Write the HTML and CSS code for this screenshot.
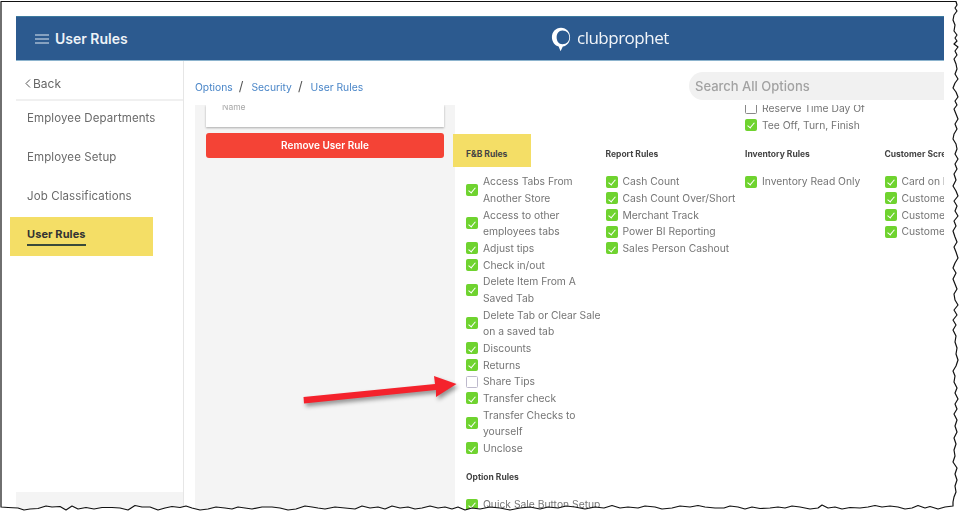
FILE: index.html
```html
<!DOCTYPE html>
<html lang="en">
<head>
<meta charset="utf-8">
<title>User Rules</title>
<link rel="stylesheet" href="styles.css">
</head>
<body>
<div class="page">
  <div class="app">
    <header class="topbar">
      <svg class="menu-icon" width="14" height="10" viewBox="0 0 14 10"><path d="M0 1H14M0 5H14M0 9H14" stroke="#dfe8f1" stroke-width="1"/></svg>
      <h1 class="title">User Rules</h1>
      <div class="logo">
        <svg class="logo-mark" width="20" height="27" viewBox="0 0 22 28"><path fill="#fff" fill-rule="evenodd" d="M11 1C5 1 1 5.800 1 11.500 1 16.800 4.600 20.800 8.400 21.700L10.500 27 13 21.800C17.800 21 21 16.800 21 11.500 21 5.800 17 1 11 1ZM12.500 4C8.500 4 6.200 7.300 6.200 11.500 6.200 15.700 8.500 19.200 12.500 19.200 17.500 19.200 20.100 15.700 20.100 11.500 20.100 7.300 17.500 4 12.500 4Z"/></svg>
        <span class="logo-text">clubprophet</span>
      </div>
    </header>
    <div class="workspace">
      <aside class="sidebar">
        <a class="back"><svg width="6" height="9" viewBox="0 0 6 9"><path d="M5 .5 1 4.500 5 8.500" fill="none" stroke="#555" stroke-width="1"/></svg>Back</a>
        <nav class="nav">
          <a class="nav-item">Employee Departments</a>
          <a class="nav-item">Employee Setup</a>
          <a class="nav-item">Job Classifications</a>
          <a class="nav-item nav-item-active"><span class="nav-label">User Rules</span></a>
        </nav>
        <div class="sidebar-foot"></div>
      </aside>
      <main class="main">
        <div class="toolbar">
          <ol class="crumbs">
            <li class="crumb">Options</li>
            <li class="sep">/</li>
            <li class="crumb">Security</li>
            <li class="sep">/</li>
            <li class="crumb">User Rules</li>
          </ol>
          <div class="search">Search All Options</div>
        </div>
        <div class="content">
          <section class="rule-list">
            <div class="card"><span class="card-label">Name</span></div>
            <button class="remove">Remove User Rule</button>
          </section>
          <section class="rules">
            <div class="grid">
              <div class="group group-top">
                <div class="rule"><i class="box box-dark"></i><span>Reserve Time Day Of</span></div>
                <div class="rule"><i class="box on"></i><span>Tee Off, Turn, Finish</span></div>
              </div>
              <div class="group">
                <h4 class="heading heading-marked">F&amp;B Rules</h4>
                <div class="rule"><i class="box on"></i><span>Access Tabs From Another Store</span></div>
                <div class="rule"><i class="box on"></i><span>Access to other employees tabs</span></div>
                <div class="rule"><i class="box on"></i><span>Adjust tips</span></div>
                <div class="rule"><i class="box on"></i><span>Check in/out</span></div>
                <div class="rule"><i class="box on"></i><span>Delete Item From A Saved Tab</span></div>
                <div class="rule"><i class="box on"></i><span>Delete Tab or Clear Sale on a saved tab</span></div>
                <div class="rule"><i class="box on"></i><span>Discounts</span></div>
                <div class="rule"><i class="box on"></i><span>Returns</span></div>
                <div class="rule"><i class="box"></i><span>Share Tips</span></div>
                <div class="rule"><i class="box on"></i><span>Transfer check</span></div>
                <div class="rule"><i class="box on"></i><span>Transfer Checks to yourself</span></div>
                <div class="rule"><i class="box on"></i><span>Unclose</span></div>
                <h4 class="heading">Option Rules</h4>
                <div class="rule"><i class="box on"></i><span>Quick Sale Button Setup</span></div>
              </div>
              <div class="group">
                <h4 class="heading">Report Rules</h4>
                <div class="rule"><i class="box on"></i><span>Cash Count</span></div>
                <div class="rule"><i class="box on"></i><span>Cash Count Over/Short</span></div>
                <div class="rule"><i class="box on"></i><span>Merchant Track</span></div>
                <div class="rule"><i class="box on"></i><span>Power BI Reporting</span></div>
                <div class="rule"><i class="box on"></i><span>Sales Person Cashout</span></div>
              </div>
              <div class="group">
                <h4 class="heading">Inventory Rules</h4>
                <div class="rule"><i class="box on"></i><span>Inventory Read Only</span></div>
              </div>
              <div class="group group-clip">
                <h4 class="heading">Customer Screen Rules</h4>
                <div class="rule"><i class="box on"></i><span>Card on File</span></div>
                <div class="rule"><i class="box on"></i><span>Customer Display</span></div>
                <div class="rule"><i class="box on"></i><span>Customer Signature</span></div>
                <div class="rule"><i class="box on"></i><span>Customer Tips</span></div>
              </div>
            </div>
          </section>
        </div>
      </main>
    </div>
  </div>

  <svg class="arrow" width="963" height="516" viewBox="0 0 963 516"><polygon points="303.500,397 435,384 434,376 456.500,384 436,397 436,390 304,403.500" fill="#f4222c"/></svg>

  <svg class="torn" width="963" height="516" viewBox="0 0 963 516"><path fill="#fff" fill-rule="evenodd" stroke="#111" stroke-width="1.200" stroke-linejoin="round" d="M-5-5H970V523H-5ZM1 1.500H956L957 5 955 8 957 11 954 15 953 20 955 25 954 31 957 35 955 38 957 41 954 44 958 47 955 51 957 55 954 59 956 64 957 69 955 74 958 79 955 83 953 88 956 92 958 97 955 101 957 105 954 109 956 114 958 119 955 124 957 129 954 134 953 139 956 144 957 149 955 154 958 159 955 164 957 169 954 174 956 180 953 186 956 191 958 196 954 201 957 206 955 211 958 216 954 221 956 226 953 231 955 237 957 242 954 247 956 252 958 258 955 263 953 268 956 273 953 279 955 284 957 289 954 294 955 300 958 305 954 310 957 315 953 320 956 325 953 330 956 336 955 342 957 348 956 354 958 360 956 366 953 371 955 376 954 382 957 388 955 393 958 399 955 404 957 409 954 414 957 420 955 426 957 432 954 438 956 444 954 450 955 456 953 462 957 468 955 474 957 480 955 486 956 492 954 497 953 502 953 506 945 507 938 509 930 506.500 925 508 918 505.500 912 508 905 509 898 507 890 506 882 507 875 505.500 868 507 860 508 850 507.500 842 509 835 507 828 508 822 505 818 508 810 509 800 507 792 506 785 508 778 507 770 508 760 508.500 752 507 745 509 738 507 730 506 724 508 715 508 705 507 698 505.500 690 507 680 506 672 508 662 509 655 507 645 506 638 508 628 507 620 508 612 505.500 604 508 595 507 585 509 575 507 566 506 558 508 548 507 540 509 530 507 520 508 510 510 500 508 490 507 480 509 472 508 465 510 458 507 452 509 445 507 438 508 430 506 422 508 415 509 408 507 400 508 392 506 385 509 378 507 370 508 362 506 355 509 345 508 335 507 325 509 318 508 312 507 305 506 296 509 288 510 280 508 272 507 262 507 252 509 245 508 238 507 232 509 225 508 216 507 208 509 200 510 192 508 186 506 180 507.500 172 506.500 165 508 158 510 150 507 142 507 135 505.500 128 510 120 508 112 507.500 102 507.500 94 509 86 507.500 78 509 72 506 66 510 60 506.500 52 507 46 506 38 508.500 30 509 24 510 18 508 8 507.500 1 507Z"/></svg>
</div>
</body>
</html>
```
FILE: styles.css
```css
* { box-sizing: border-box; }
html, body { margin: 0; height: 100%; }
body { background: #fff; font-family: Inter, "Open Sans", sans-serif; overflow: hidden; }
.page { position: relative; width: 963px; height: 516px; overflow: hidden; background: #fff; padding: 16px 19px 0 16px; }
.app { height: 500px; display: flex; flex-direction: column; filter: blur(0.4px); }

.topbar { height: 45px; flex: none; display: flex; align-items: center; background: #2c5a8f; border-top: 1px solid #3d7a9e; border-bottom: 1px solid #8db4ce; padding-left: 19px; color: #fff; }
.menu-icon { flex: none; }
.title { margin: 0 0 0 6px; width: 72px; font-size: 14px; font-weight: 600; white-space: nowrap; color: #eef3f8; }
.logo { display: flex; align-items: center; margin-left: 424px; gap: 6px; }
.logo-mark { flex: none; margin-top: 2px; }
.logo-text { font-family: "Open Sans", sans-serif; font-size: 17px; letter-spacing: -0.5px; line-height: 20px; margin-top: -2px; color: #f2f5f9; }

.workspace { flex: 1; min-height: 0; display: flex; }
.sidebar { width: 168px; flex: none; display: flex; flex-direction: column; border-right: 1px solid #e6e6e6; }
.back { height: 40px; flex: none; display: flex; align-items: center; gap: 2px; padding: 6px 0 0 9px; border-bottom: 2px solid #f0f0f0; font-size: 12px; color: #666; }
.nav { flex: 1; display: flex; flex-direction: column; margin-top: -3px; }
.nav-item { height: 39px; flex: none; display: flex; align-items: center; padding-left: 11px; font-size: 11.500px; letter-spacing: 0.1px; color: #6a6a6a; white-space: nowrap; }
.nav-item-active { position: relative; color: #333; font-weight: 700; z-index: 0; margin-top: 2px; }
.nav-item-active::before { content: ""; position: absolute; z-index: -1; left: -6px; top: 0; width: 143px; height: 39px; background: #f4de66; }
.nav-label { font-size: 11px; border-bottom: 2px solid #3a4a3a; padding-bottom: 3px; line-height: 14px; }
.sidebar-foot { height: 24px; flex: none; background: #f4f4f4; }

.main { flex: 1; min-width: 0; display: flex; flex-direction: column; }
.toolbar { height: 44px; flex: none; display: flex; justify-content: space-between; align-items: flex-start; padding: 11px 0 0 11px; }
.crumbs { list-style: none; margin: 8px 0 0; padding: 0; display: flex; gap: 6px; font-size: 10.300px; line-height: 14px; }
.crumb { color: #4a86c8; }
.sep { color: #555; font-size: 13px; line-height: 12px; margin-right: 2px; }
.search { width: 255px; height: 28px; border-radius: 14px 0 0 14px; background: #f1f1f1; color: #a2a2a2; font-size: 13px; font-weight: 500; line-height: 28px; padding-left: 6px; }

.content { flex: 1; min-height: 0; display: flex; overflow: hidden; }
.rule-list { width: 260px; flex: none; margin-left: 11px; background: #f4f4f4; padding: 0 11px; display: flex; flex-direction: column; align-items: stretch; }
.card { height: 22px; background: #fff; box-shadow: 0 1px 2px #aaa; padding-left: 16px; font-size: 8.500px; line-height: 5px; color: #a8a8a8; flex: none; }
.card-label { display: block; }
.remove { height: 25px; margin-top: 6px; flex: none; border: 0; border-radius: 3px; background: #f44336; color: #fff; font: 600 10px/24px Inter, sans-serif; padding: 0 0 3px; }

.rules { flex: 1; min-width: 0; overflow: hidden; margin-left: -2px; padding-left: 13px; position: relative; }
.grid { display: grid; grid-template-columns: repeat(4, 139.500px); margin-top: -5px; }
.group { grid-row: 2; }
.group-top { grid-column: 3; grid-row: 1; }
.group-clip { white-space: nowrap; }
.heading { position: relative; z-index: 0; margin: 0; padding: 15px 0 12px; font-size: 8.500px; line-height: 13px; font-weight: 700; color: #444; white-space: nowrap; }
.heading-marked::before { content: ""; position: absolute; z-index: -1; left: -13px; top: 1px; width: 78px; height: 33px; background: #f4de66; }
.rule { display: flex; align-items: center; gap: 5px; font-size: 10.300px; line-height: 16.650px; color: #757575; width: 136px; }
.group-clip .rule { width: auto; }
.box { position: relative; flex: none; width: 12px; height: 12px; border: 1px solid #bdb9cc; border-radius: 1.500px; background: #fff; }
.box-dark { border-color: #888; }
.box.on { background: #6fd32f; border-color: #6fd32f; }
.box.on::after { content: ""; position: absolute; left: 3px; top: 1.500px; width: 3px; height: 6px; border: solid #fff; border-width: 0 1.500px 1.500px 0; transform: rotate(40deg); }

.arrow { position: absolute; left: 0; top: 0; pointer-events: none; filter: drop-shadow(2px 3px 2px rgba(0,0,0,.4)) blur(0.4px); }
.torn { position: absolute; left: 0; top: 0; pointer-events: none; }
```
